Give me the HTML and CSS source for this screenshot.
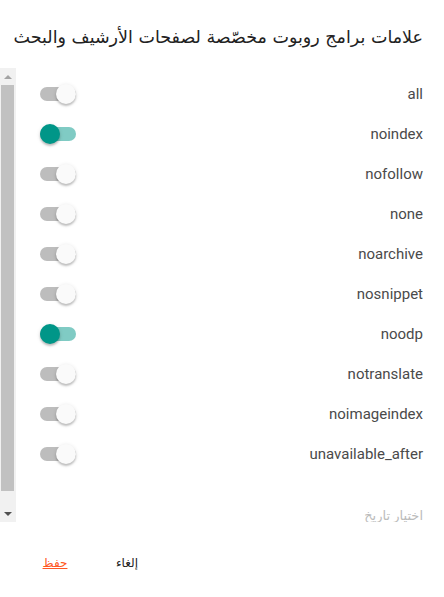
FILE: index.html
```html
<!DOCTYPE html>
<html lang="ar" dir="rtl">
<head>
    <meta charset="UTF-8">
    <meta name="viewport" content="width=device-width, initial-scale=1.0">
    <title>Robots</title>
    <link rel="stylesheet" href="styles.css">
</head>
<body>
    <div class="dialog">
        <h2 class="title">علامات برامج روبوت مخصّصة لصفحات الأرشيف والبحث</h2>

        <div class="scroller">
            <div class="content">
                <div class="row"><span class="label">all</span><span class="switch"></span></div>
                <div class="row"><span class="label">noindex</span><span class="switch on"></span></div>
                <div class="row"><span class="label">nofollow</span><span class="switch"></span></div>
                <div class="row"><span class="label">none</span><span class="switch"></span></div>
                <div class="row"><span class="label">noarchive</span><span class="switch"></span></div>
                <div class="row"><span class="label">nosnippet</span><span class="switch"></span></div>
                <div class="row"><span class="label">noodp</span><span class="switch on"></span></div>
                <div class="row"><span class="label">notranslate</span><span class="switch"></span></div>
                <div class="row"><span class="label">noimageindex</span><span class="switch"></span></div>
                <div class="row"><span class="label">unavailable_after</span><span class="switch"></span></div>

                <div class="datefield">اختيار تاريخ</div>
            </div>
            <div class="scrollbar">
                <div class="arrow up"></div>
                <div class="thumb"></div>
                <div class="arrow down"></div>
            </div>
        </div>

        <div class="buttons">
            <span class="btn">إلغاء</span>
            <span class="btn save">حفظ</span>
        </div>
    </div>
</body>
</html>
```

FILE: styles.css
```css
*{
    box-sizing: border-box;
}
body{
    margin: 0;
    background: #fff;
    font-family: Roboto, "DejaVu Sans", sans-serif;
}
.dialog{
    width: 444px;
    height: 597px;
    background: #fff;
}
.title{
    margin: 0;
    padding: 25px 21px 0 0;
    height: 68px;
    font-family: "DejaVu Sans", sans-serif;
    font-size: 17.5px;
    font-weight: 400;
    line-height: 24px;
    color: #222;
    white-space: nowrap;
}
.scroller{
    display: flex;
    height: 454px;
}
.content{
    flex: 1;
    overflow: hidden;
    padding: 6px 21px 0 24px;
}
.scrollbar{
    display: flex;
    flex-direction: column;
    width: 16px;
    background: #f1f1f1;
}
.arrow{
    display: flex;
    justify-content: center;
    align-items: center;
    height: 17px;
}
.arrow::before{
    content: "";
    border-left: 4px solid transparent;
    border-right: 4px solid transparent;
}
.arrow.up::before{
    border-bottom: 4px solid #a3a3a3;
}
.arrow.down::before{
    border-top: 4px solid #505050;
}
.thumb{
    flex: 1;
    margin: 0 2px 14px 1px;
    background: #c1c1c1;
}
.row{
    display: flex;
    align-items: center;
    height: 40px;
}
.label{
    font-size: 15px;
    color: #4a4a4a;
}
.switch{
    position: relative;
    margin-right: auto;
    width: 36px;
    height: 14px;
    border-radius: 7px;
    background: #bdbdbd;
}
.switch::after{
    content: "";
    position: absolute;
    top: -3px;
    left: 16px;
    width: 20px;
    height: 20px;
    border-radius: 50%;
    background: #fafafa;
    box-shadow: 0 2px 2px rgba(0,0,0,.2), 0 1px 4px rgba(0,0,0,.12);
}
.switch.on{
    background: #80cbc4;
}
.switch.on::after{
    left: 0;
    background: #009688;
}
.datefield{
    margin-top: 34px;
    font-size: 13px;
    color: #bbb;
}
.buttons{
    display: flex;
    justify-content: flex-end;
    gap: 8px;
    padding: 34px 0 0 23px;
}
.btn{
    width: 64px;
    text-align: center;
    font-family: "DejaVu Sans", sans-serif;
    font-size: 12px;
    color: #222;
}
.btn.save{
    color: #ff5722;
    text-decoration: underline;
}
```
